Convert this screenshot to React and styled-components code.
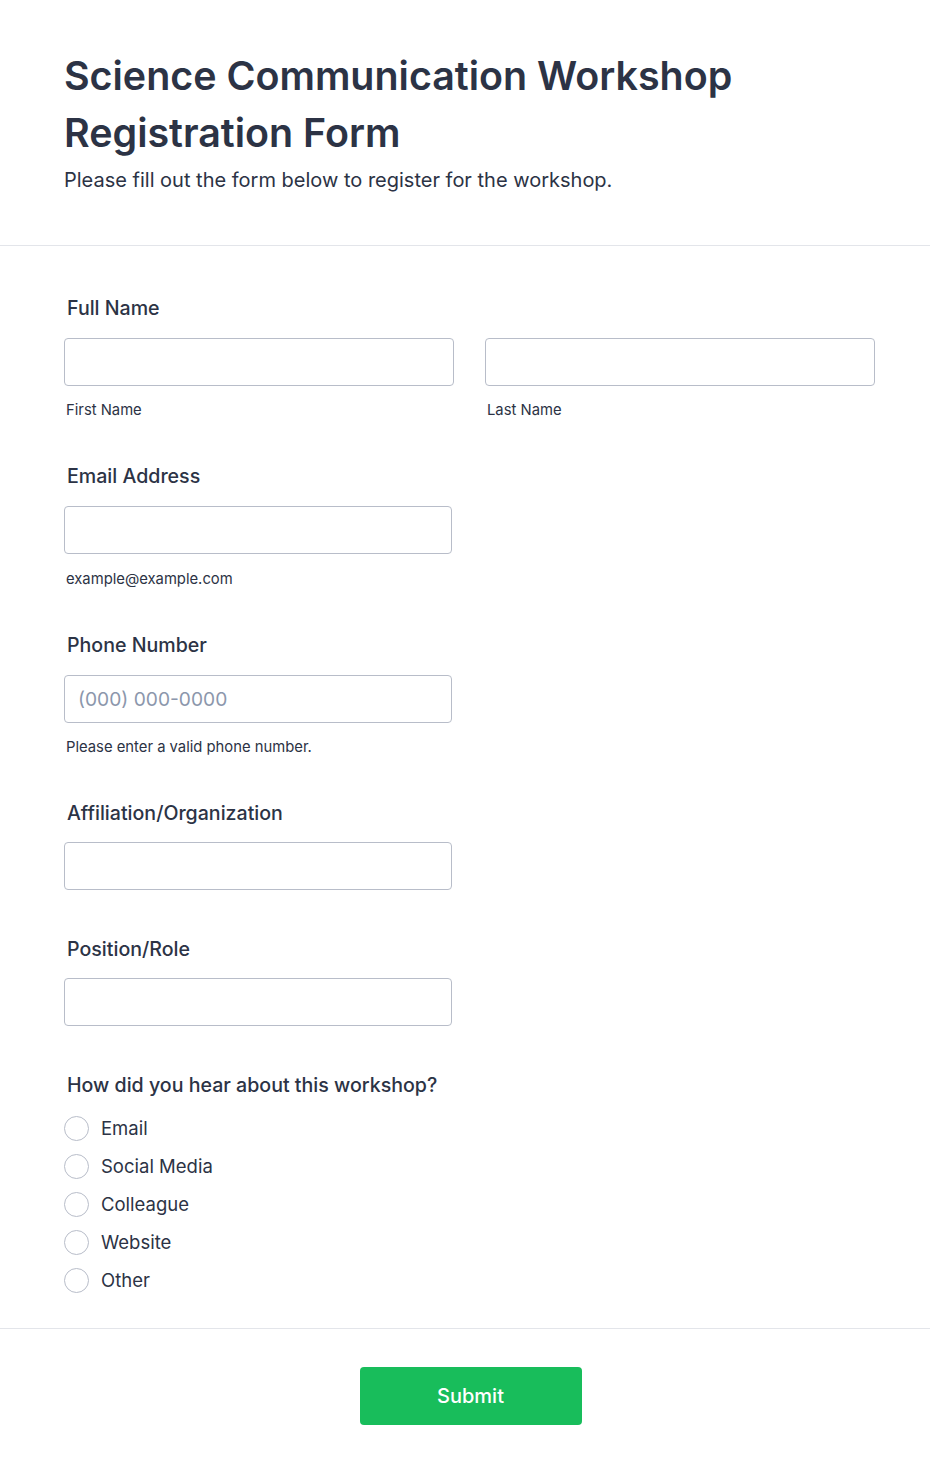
import styled, { createGlobalStyle } from "styled-components";

const Global = createGlobalStyle`
  body {
    margin: 0;
    background: #fff;
    font-family: Inter, "Noto Sans", sans-serif;
    color: #2c3345;
  }
  * { box-sizing: border-box; }
`;

const Page = styled.div`
  width: 930px;
  display: flex;
  flex-direction: column;
`;

const Header = styled.header`
  padding: 48px 64px 52px 64px;
  border-bottom: 1px solid #e3e5ea;
`;

const Title = styled.h1`
  margin: 0 0 6px;
  font-size: 39.4px;
  line-height: 57px;
  font-weight: 600;
  color: #2c3345;
`;

const Subtitle = styled.p`
  margin: 0;
  font-size: 20px;
  line-height: 25px;
  color: #2c3345;
`;

const Body = styled.div`
  padding: 50px 55px 29px 64px;
  border-bottom: 1px solid #e3e5ea;
`;

const Field = styled.div`
  display: flex;
  flex-direction: column;
  margin-bottom: ${(p) => p.$gap ?? 45}px;
`;

const Label = styled.label`
  font-size: 19.6px;
  line-height: 24px;
  font-weight: 500;
  padding-left: 3px;
  margin-bottom: ${(p) => p.$mb ?? 18}px;
`;

const Row = styled.div`
  display: flex;
  gap: 31px;
`;

const Col = styled.div`
  display: flex;
  flex-direction: column;
  width: ${(p) => p.$w || 388}px;
`;

const Input = styled.input`
  width: 100%;
  height: 48px;
  border: 1px solid #b8bdc9;
  border-radius: 4px;
  padding: 0 13px;
  font-family: inherit;
  font-size: 19.2px;
  color: #2c3345;
  outline: none;
  &::placeholder { color: #8c97ac; }
`;

const Sub = styled.span`
  margin-top: ${(p) => p.$mt ?? 15}px;
  font-size: 14.8px;
  line-height: 18px;
  padding-left: 2px;
  color: #2c3345;
`;

const Radios = styled.div`
  display: flex;
  flex-direction: column;
  margin-top: 12px;
`;

const RadioRow = styled.label`
  display: flex;
  align-items: center;
  gap: 12px;
  height: 38px;
  font-size: 18.5px;
  color: #2c3345;
`;

const Circle = styled.span`
  width: 25px;
  height: 25px;
  border-radius: 50%;
  border: 1px solid #b8bdc9;
  background: #fff;
  flex-shrink: 0;
`;

const Footer = styled.div`
  display: flex;
  justify-content: center;
  padding: 38px 0 50px;
`;

const Button = styled.button`
  width: 222px;
  height: 58px;
  border: none;
  border-radius: 4px;
  background: #18bd5b;
  color: #fff;
  font-family: inherit;
  font-size: 20px;
  font-weight: 500;
  margin-left: 11px;
`;

const options = ["Email", "Social Media", "Colleague", "Website", "Other"];

export default function App() {
  return (
    <Page>
      <Global />
      <Header>
        <Title>
          Science Communication Workshop
          <br />
          Registration Form
        </Title>
        <Subtitle>Please fill out the form below to register for the workshop.</Subtitle>
      </Header>
      <Body>
        <Field>
          <Label>Full Name</Label>
          <Row>
            <Col $w={390}>
              <Input />
              <Sub>First Name</Sub>
            </Col>
            <Col $w={390}>
              <Input />
              <Sub>Last Name</Sub>
            </Col>
          </Row>
        </Field>
        <Field>
          <Label>Email Address</Label>
          <Col>
            <Input />
            <Sub $mt={16}>example@example.com</Sub>
          </Col>
        </Field>
        <Field>
          <Label>Phone Number</Label>
          <Col>
            <Input placeholder="(000) 000-0000" />
            <Sub>Please enter a valid phone number.</Sub>
          </Col>
        </Field>
        <Field $gap={47}>
          <Label $mb={17}>Affiliation/Organization</Label>
          <Col>
            <Input />
          </Col>
        </Field>
        <Field $gap={47}>
          <Label $mb={17}>Position/Role</Label>
          <Col>
            <Input />
          </Col>
        </Field>
        <Field $gap={0}>
          <Label $mb={0}>How did you hear about this workshop?</Label>
          <Radios>
            {options.map((o) => (
              <RadioRow key={o}>
                <Circle />
                {o}
              </RadioRow>
            ))}
          </Radios>
        </Field>
      </Body>
      <Footer>
        <Button>Submit</Button>
      </Footer>
    </Page>
  );
}
